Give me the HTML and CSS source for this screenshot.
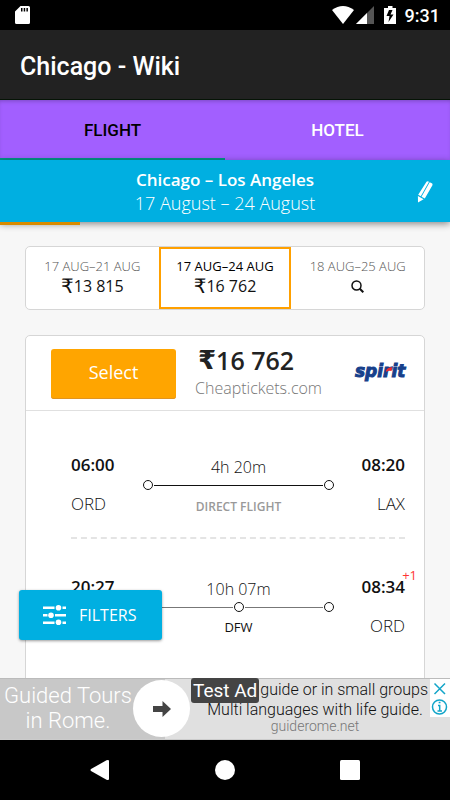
FILE: index.html
```html
<!DOCTYPE html>
<html lang="en">
<head>
<meta charset="utf-8">
<meta name="viewport" content="width=device-width, initial-scale=1">
<title>Chicago - Wiki</title>
<link rel="stylesheet" href="styles.css">
</head>
<body>
<div class="status">
  <svg class="sd" width="15" height="18" viewBox="0 0 15 18"><path fill="#fff" fill-rule="evenodd" d="M5.500 0H13.500Q15 0 15 1.500V16.500Q15 18 13.500 18H1.500Q0 18 0 16.500V5.500ZM6 2V5.500H7.500V2ZM8.700 2V5.500H10.200V2ZM11.400 2V5.500H12.900V2Z"/></svg>
  <svg class="signals" width="66" height="18" viewBox="0 0 66 18">
    <path fill="#fff" d="M0 4Q11-4 22 4L11 18Z"/>
    <path fill="#555" d="M42 0V18H24Z"/>
    <path fill="#fff" d="M35 7V18H24Z"/>
    <path fill="#fff" fill-rule="evenodd" d="M56 0H60.500V2H64V18H52V2H56ZM57 4L54.500 10H57.500L56.500 16L61.500 8.500H58.500L60.500 4Z"/>
  </svg>
  <span class="clock">9:31</span>
</div>
<header class="appbar"><h1>Chicago - Wiki</h1></header>
<nav class="tabs">
  <button class="tab tab-on">FLIGHT</button>
  <button class="tab">HOTEL</button>
</nav>
<section class="search">
  <h2>Chicago – Los Angeles</h2>
  <p>17 August – 24 August</p>
  <button class="edit" aria-label="Edit search">
    <svg width="16" height="22" viewBox="0 0 16 22"><path fill="#fff" d="M9.500.8Q10.500-.2 12 .7L3.800 15.300L1.200 13.800ZM12.700 1.200L15.200 2.600Q15.800 3.400 15.300 4.600L7.800 17.500L4.500 15.700ZM.9 15L6.600 18.300L1 21.500Z"/></svg>
  </button>
</section>
<main class="results">
  <div class="progress"></div>
  <div class="dates">
    <button class="date"><span class="days">17 AUG–21 AUG</span><span class="fare"><span class="rupee">₹</span>13 815</span></button>
    <button class="date date-on"><span class="days">17 AUG–24 AUG</span><span class="fare"><span class="rupee">₹</span>16 762</span></button>
    <button class="date"><span class="days">18 AUG–25 AUG</span><span class="fare"><svg width="13" height="13" viewBox="0 0 13 13" fill="none" stroke="#111"><circle cx="5.500" cy="5.500" r="4.500" stroke-width="1.500"/><path stroke-width="2" d="M8.800 8.800L12.300 12.300"/></svg></span></button>
  </div>
  <article class="ticket">
    <div class="offer">
      <button class="select">Select</button>
      <div class="price"><strong><span class="rupee">₹</span>16 762</strong><span>Cheaptickets.com</span></div>
      <svg class="airline" width="52" height="20" viewBox="0 0 52 20" role="img" aria-label="spirit">
        <text x="1" y="13" class="logo">spirit</text>
        <path fill="#ed2b2f" d="M32 6.500Q34 3 38.500 3.300L37.500 7Q34.500 6 32.500 8Z"/>
      </svg>
    </div>
    <div class="legs">
      <div class="leg">
        <div class="end"><b>06:00</b><span>ORD</span></div>
        <div class="route"><span class="duration">4h 20m</span><div class="line"><i></i><hr><i></i></div><span class="direct">DIRECT FLIGHT</span></div>
        <div class="end end-right"><b>08:20</b><span>LAX</span></div>
      </div>
      <div class="leg leg-back">
        <div class="end"><b>20:27</b></div>
        <div class="route"><span class="duration">10h 07m</span><div class="line"><i></i><hr><i></i><hr><i></i></div><span class="stop">DFW</span></div>
        <div class="end end-right"><b>08:34<sup>+1</sup></b><span>ORD</span></div>
      </div>
    </div>
  </article>
  <button class="filters">
    <svg width="24" height="20" viewBox="0 0 24 20" fill="#fff"><path d="M0 1.500H11.500V4H0ZM19.500 1.500H23V4H19.500ZM0 9H4.500V11.500H0ZM12 9H23V11.500H12ZM0 16.500H11.500V19H0ZM19.500 16.500H23V19H19.500Z"/><circle cx="15.500" cy="2.800" r="2.800"/><circle cx="8" cy="10.200" r="2.800"/><circle cx="15.500" cy="17.200" r="2.800"/></svg>
    FILTERS
  </button>
</main>
<aside class="ad">
  <div class="ad-title">Guided Tours<br>in Rome.</div>
  <a class="ad-go" href="#" aria-label="Open"><svg width="18" height="16" viewBox="0 0 18 16"><path fill="#444" d="M0 5H9.500V0L18 8L9.500 16V11H0Z"/></svg></a>
  <div class="ad-text">
    <p class="ad-first"><span class="badge">Test Ad</span>guide or in small groups</p>
    <p>Multi languages with life guide.</p>
    <a href="#">guiderome.net</a>
  </div>
  <button class="ad-close" aria-label="Close ad">
    <svg width="20" height="38" viewBox="0 0 20 38" fill="none" stroke="#12a5c9" stroke-width="1.500"><path d="M4.500 4.500L15 15M15 4.500L4.500 15"/><circle cx="9.500" cy="28" r="7"/><path d="M8 26.500H9.700V32M7.500 32H12M8.700 23.500H10.500"/></svg>
  </button>
</aside>
<nav class="system">
  <button aria-label="Back"><svg width="20" height="22" viewBox="0 0 20 22"><path fill="#fff" d="M1 10Q0 11 1 12L16.500 20.700Q19 21.500 19 20V2Q19 .5 16.500 1.300Z"/></svg></button>
  <button aria-label="Home"><svg width="20" height="20" viewBox="0 0 20 20"><circle cx="10" cy="10" r="10" fill="#fff"/></svg></button>
  <button aria-label="Recent apps"><svg width="20" height="20" viewBox="0 0 20 20"><rect width="20" height="20" rx="1.500" fill="#fff"/></svg></button>
</nav>
</body>
</html>
```
FILE: styles.css
```css
* { box-sizing: border-box; }
body {
  margin: 0;
  height: 100vh;
  display: flex;
  flex-direction: column;
  overflow: hidden;
  background: #f7f7f7;
  color: #111;
  font-family: "Open Sans", sans-serif;
}
h1, h2, p { margin: 0; }
button { border: 0; padding: 0; margin: 0; background: none; font: inherit; color: inherit; }
svg { display: block; }

.status {
  flex: none;
  display: flex;
  align-items: center;
  height: 30px;
  padding: 0 10px 0 15px;
  background: #000;
  color: #fff;
}
.signals { margin-left: auto; }
.clock { margin-left: 7px; padding-top: 1px; font: 500 18px/30px Roboto, sans-serif; }

.appbar {
  flex: none;
  padding: 0 20px;
  background: #222;
  border-bottom: 1px solid #051405;
  color: #fff;
}
.appbar h1 { font: 500 25px/69px Roboto, sans-serif; padding-top: 2px; height: 69px; }

.tabs { flex: none; display: flex; height: 60px; background: #a25fff; box-shadow: inset 0 3px 4px -2px rgba(0, 0, 0, .25); }
.tab { flex: 1; padding-top: 2px; border-bottom: 2px solid transparent; color: #fff; font: 500 17px/20px Roboto, sans-serif; }
.tab-on { color: #000; border-color: #009688; }

.search {
  flex: none;
  position: relative;
  z-index: 1;
  padding: 8px 0 7px;
  background: #00afe1;
  color: #fff;
  text-align: center;
  box-shadow: 0 2px 7px rgba(0, 0, 0, .45);
}
.search h2 { font-size: 17px; line-height: 24px; font-weight: 600; }
.search p { font-size: 18px; line-height: 23px; font-weight: 300; }
.edit { position: absolute; right: 17px; top: 21px; }

.results { flex: 1; min-height: 0; position: relative; overflow: hidden; padding: 0 25px; }
.progress { position: relative; z-index: 2; width: 80px; height: 3px; margin-left: -25px; background: #d98b00; }

.dates {
  display: grid;
  grid-template-columns: repeat(3, 1fr);
  height: 64px;
  margin-top: 21px;
  background: #fff;
  border: 1px solid #d6d6d6;
  border-radius: 5px;
}
.date { display: flex; flex-direction: column; align-items: center; padding-top: 10px; }
.date-on { border: 2px solid #ffa000; padding-top: 8px; }
.days { font-size: 13px; line-height: 19px; font-weight: 300; color: #555; }
.date-on .days { color: #000; font-weight: 400; }
.fare { display: flex; align-items: center; font-size: 16px; line-height: 20px; height: 20px; }
.rupee { font-family: "DejaVu Sans", sans-serif; font-size: 20px; line-height: 20px; font-weight: 400; }

.ticket { margin-top: 25px; background: #fff; border: 1px solid #d6d6d6; border-radius: 5px; height: 500px; }
.offer {
  display: flex;
  align-items: center;
  height: 75px;
  padding: 1px 18px 0 25px;
  border-bottom: 1px solid #e0e0e0;
}
.select {
  width: 125px;
  height: 50px;
  padding-bottom: 3px;
  background: #ffa500;
  border-radius: 3px;
  box-shadow: inset 0 -1px #e09420;
  color: #fff;
  font-size: 18px;
}
.price { flex: 1; display: flex; flex-direction: column; padding: 0 0 2px 19px; }
.price strong { display: flex; align-items: center; font-size: 25px; line-height: 28px; height: 28px; font-weight: 600; margin-bottom: 2px; padding-left: 3px; color: #222; }
.price .rupee { font-size: 26px; font-weight: 700; }
.price > span { font-size: 16px; line-height: 24px; font-weight: 300; color: #777; }
.airline { overflow: visible; }
.logo { font: italic 700 17px "DejaVu Sans", sans-serif; fill: #17408b; stroke: #17408b; stroke-width: 1px; }

.legs { padding: 30px 19px 0 45px; }
.leg { display: grid; grid-template-columns: 72px 1fr 71px; padding: 12px 0 0; border-bottom: 2px dashed #e4e4e4; height: 98px; }
.leg-back { border: 0; margin-top: 24px; }
.end { display: flex; flex-direction: column; gap: 15px; font-size: 17px; line-height: 24px; font-weight: 300; }
.end b { position: relative; font-weight: 600; }
.end-right { text-align: right; }
.end sup { position: absolute; right: -12px; top: -8px; font-size: 13px; line-height: 16px; font-weight: 400; color: #f33; }
.route { display: flex; flex-direction: column; align-items: center; padding-top: 2px; }
.duration { font-size: 16px; line-height: 24px; font-weight: 300; }
.line { display: flex; align-items: center; gap: 1px; align-self: stretch; margin-top: 1px; }
.line i { width: 10px; height: 10px; border: 1px solid #111; border-radius: 50%; }
.line hr { flex: 1; margin: 0; border: 0; height: 1px; background: #111; }
.leg-back hr { background: #777; }
.direct, .stop { font-size: 12px; line-height: 18px; margin-top: 8px; }
.direct { color: #999; font-weight: 600; }
.stop { font-size: 13px; margin-top: 6px; }

.filters {
  position: absolute;
  left: 19px;
  bottom: 38px;
  display: flex;
  align-items: center;
  gap: 12px;
  height: 50px;
  padding: 0 26px 0 24px;
  background: #00afe1;
  border-radius: 3px;
  box-shadow: 0 1px 3px rgba(0, 0, 0, .4);
  color: #fff;
  font-size: 16px;
}

.ad {
  flex: none;
  display: flex;
  height: 62px;
  position: relative;
  background: linear-gradient(90deg, #c8c8c8 165px, #e0e0e0 165px);
  box-shadow: inset 0 1px #bbb, inset 0 -1px #ccc;
  font-family: Roboto, sans-serif;
  font-weight: 300;
}
.ad-title { width: 133px; padding: 5px 0 0 3px; text-align: center; white-space: nowrap; color: #fff; font-size: 22px; line-height: 25px; }
.ad-go { flex: none; width: 57px; height: 57px; margin-top: 2px; border-radius: 50%; background: #fff; display: flex; align-items: center; justify-content: center; }
.ad-text { flex: 1; padding-right: 20px; text-align: center; white-space: nowrap; font-size: 16px; line-height: 16px; }
.ad-text > a { display: block; padding-left: 10px; color: #777; font-size: 14px; line-height: 17px; text-decoration: none; }
.ad-text > p + p { padding-left: 10px; }
.ad-first { display: flex; align-items: center; height: 24px; }
.badge { margin: 0 1px; padding: 0 2px; background: #444; border-radius: 3px; color: #fff; font-size: 19px; line-height: 25px; font-weight: 400; }
.ad-close { position: absolute; right: 0; top: 1px; background: #fff; }

.system { flex: none; display: flex; justify-content: center; gap: 105px; height: 60px; background: #000; }
.system button { display: flex; align-items: center; }
```
